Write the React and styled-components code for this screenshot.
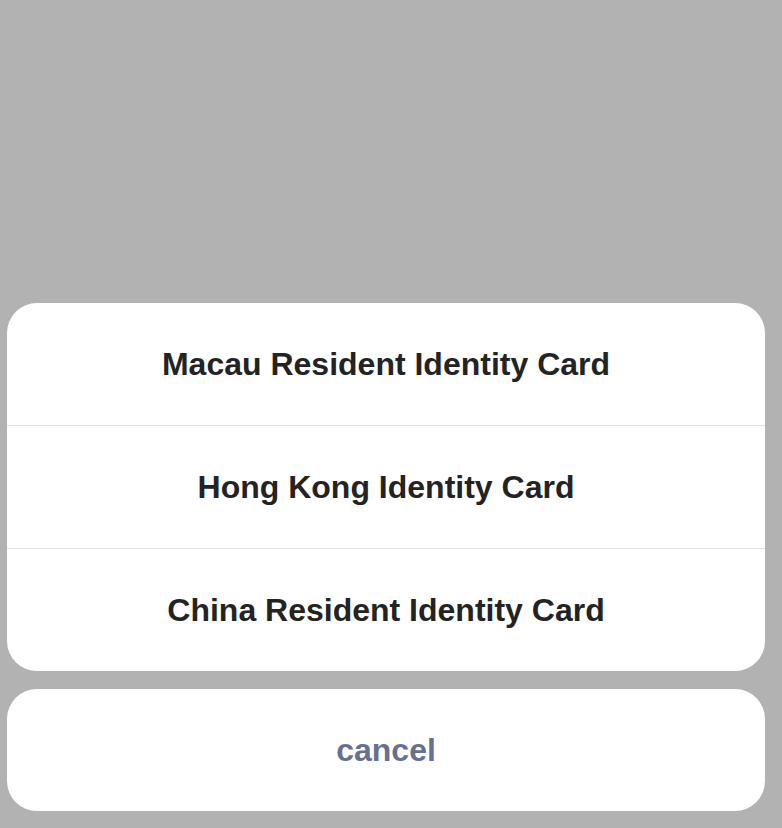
import React from "react";
import styled, { createGlobalStyle } from "styled-components";

const options = [
  "Macau Resident Identity Card",
  "Hong Kong Identity Card",
  "China Resident Identity Card",
];

const GlobalStyle = createGlobalStyle`
  html, body {
    margin: 0;
    padding: 0;
    background: #b2b2b2;
  }
  body {
    font-family: "Liberation Sans", Arial, sans-serif;
  }
`;

const Screen = styled.div`
  height: 828px;
  display: flex;
  flex-direction: column;
  justify-content: flex-end;
  padding: 0 17px 17px 7px;
  box-sizing: border-box;
`;

const Sheet = styled.div`
  display: flex;
  flex-direction: column;
  gap: 18px;
`;

const Group = styled.div`
  background: #fff;
  border-radius: 30px;
  overflow: hidden;
  display: flex;
  flex-direction: column;
`;

const Option = styled.div`
  height: 122px;
  display: flex;
  align-items: center;
  justify-content: center;
  font-size: 32px;
  font-weight: bold;
  color: ${(p) => (p.$muted ? "#66718f" : "#232323")};
  & + & {
    border-top: 1px solid #e0e2eb;
  }
`;

const App = () => {
  return (
    <>
      <GlobalStyle />
      <Screen>
        <Sheet>
          <Group>
            {options.map((o) => (
              <Option key={o}>{o}</Option>
            ))}
          </Group>
          <Group>
            <Option $muted>cancel</Option>
          </Group>
        </Sheet>
      </Screen>
    </>
  );
};

export default App;
